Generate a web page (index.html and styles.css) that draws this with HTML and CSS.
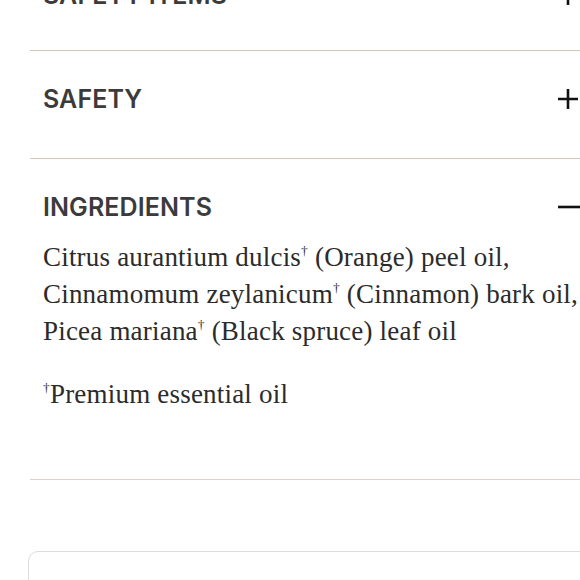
FILE: index.html
```html
<!DOCTYPE html>
<html lang="en">
<head>
<meta charset="utf-8">
<title>Product details</title>
<link rel="stylesheet" href="styles.css">
</head>
<body>
<div class="page">
  <div class="accordion">
    <section class="item item--first">
      <div class="item__head">
        <h3 class="item__title">SAFETY ITEMS</h3>
        <svg class="icon" viewBox="0 0 22 22" aria-hidden="true"><path d="M11 1V21M1 11H21"/></svg>
      </div>
    </section>
    <section class="item">
      <div class="item__head">
        <h3 class="item__title">SAFETY</h3>
        <svg class="icon" viewBox="0 0 22 22" aria-hidden="true"><path d="M11 1V21M1 11H21"/></svg>
      </div>
    </section>
    <section class="item item--open">
      <div class="item__head">
        <h3 class="item__title">INGREDIENTS</h3>
        <svg class="icon" viewBox="0 0 22 22" aria-hidden="true"><path d="M1 11H23"/></svg>
      </div>
      <div class="item__body">
        <p>Citrus aurantium dulcis<sup>†</sup> (Orange) peel oil,<br>Cinnamomum zeylanicum<sup>†</sup> (Cinnamon) bark oil,<br>Picea mariana<sup>†</sup> (Black spruce) leaf oil</p>
        <p class="note"><sup>†</sup>Premium essential oil</p>
      </div>
    </section>
  </div>
  <div class="card"></div>
</div>
</body>
</html>
```
FILE: styles.css
```css
html, body {
  margin: 0;
  padding: 0;
  background: #ffffff;
  overflow: hidden;
  height: 580px;
}
.page {
  width: 562px;
  margin-left: 30px;
  margin-top: -53px;
}
.accordion {
  display: flex;
  flex-direction: column;
}
.item {
  border-bottom: 1px solid #d5c6b4;
}
.item--open {
  border-bottom-color: #dad5cb;
}
.item__head {
  display: flex;
  align-items: center;
  justify-content: space-between;
  padding: 36px 13px 47px 13px;
  height: 24px;
}
.item--first .item__head {
  padding-bottom: 43px;
}
.item--open .item__head {
  padding-bottom: 20px;
}
.item__title {
  margin: 0;
  font-family: Inter, "Noto Sans", sans-serif;
  font-weight: 600;
  font-size: 25px;
  line-height: 24px;
  color: #3b3b3b;
  letter-spacing: 0.1px;
}
.icon {
  width: 22px;
  height: 22px;
  fill: none;
  stroke: #111111;
  stroke-width: 2.6;
  overflow: visible;
}
.item__body {
  padding: 0 0 66px 13px;
}
.item__body p {
  margin: 0;
  font-family: "Liberation Serif", "Times New Roman", serif;
  font-size: 27px;
  line-height: 37px;
  letter-spacing: 0.2px;
  white-space: nowrap;
  color: #2b2b2b;
}
.item__body p.note {
  margin-top: 26px;
}
.item__body sup {
  font-size: 0.5em;
  line-height: 0;
  vertical-align: 0.8em;
}
.card {
  margin-top: 71px;
  margin-left: -2px;
  height: 80px;
  border: 1.5px solid #dcdcdc;
  border-radius: 10px;
}
```
